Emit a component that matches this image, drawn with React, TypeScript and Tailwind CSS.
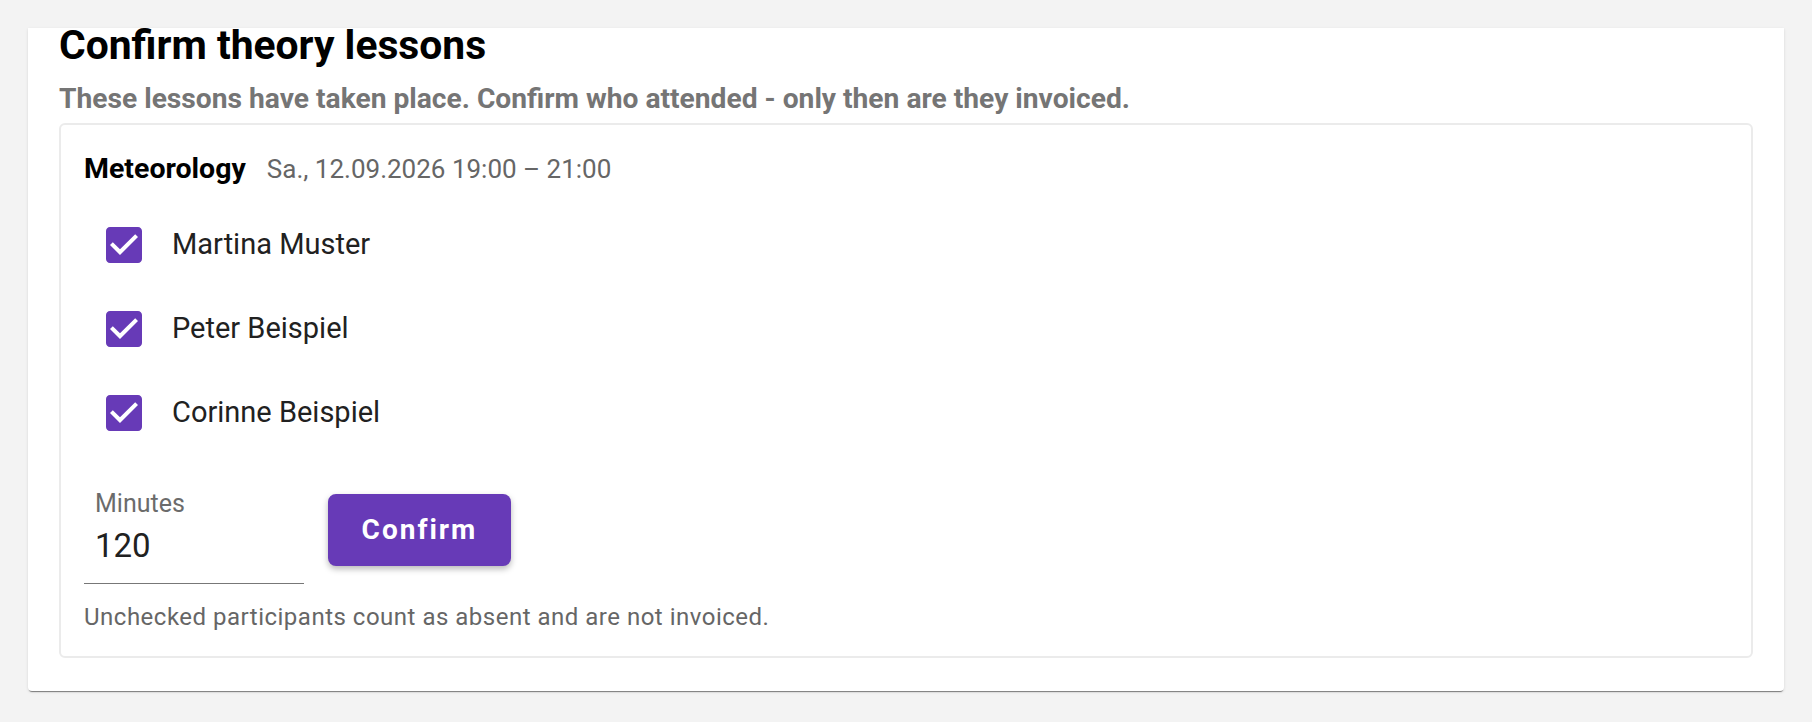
const students = ["Martina Muster", "Peter Beispiel", "Corinne Beispiel"];

function CheckedBox() {
  return (
    <svg viewBox="0 0 24 24" className="w-[48px] h-[48px] shrink-0" fill="#673ab7">
      <path d="M19 3H5c-1.11 0-2 .9-2 2v14c0 1.1.89 2 2 2h14c1.11 0 2-.9 2-2V5c0-1.1-.89-2-2-2zm-9 14l-5-5 1.41-1.41L10 14.17l7.59-7.59L19 8l-9 9z" />
    </svg>
  );
}

export default function App() {
  return (
    <div className="h-[722px] bg-[#f3f3f3] px-[28px] pt-[28px] font-['Roboto',_'Liberation_Sans',_sans-serif]">
      <div className="bg-white rounded-b-[4px] shadow-[0_2px_1px_-1px_rgba(0,0,0,0.45),0_1px_3px_0_rgba(0,0,0,0.12)] px-[31px] pb-[33px]">
        <h2 className="text-[40.8px] leading-[34px] font-bold text-black">Confirm theory lessons</h2>
        <p className="mt-[19px] text-[28.2px] leading-[36px] font-bold text-[#757575]">
          These lessons have taken place. Confirm who attended - only then are they invoiced.
        </p>

        <div className="mt-[6px] border-2 border-[#ebebeb] rounded-[6px] px-[23px] pt-[26px] pb-[24px]">
          <div className="flex items-baseline gap-[21px] leading-[36px]">
            <span className="text-[28.5px] font-bold text-black">Meteorology</span>
            <span className="text-[26px] text-[#666666]">Sa., 12.09.2026 19:00 – 21:00</span>
          </div>

          <div className="mt-[16px] flex flex-col">
            {students.map((name) => (
              <label key={name} className="h-[84px] flex items-center">
                <span className="ml-[16px]">
                  <CheckedBox />
                </span>
                <span className="ml-[24px] text-[29px] text-[#212121]">{name}</span>
              </label>
            ))}
          </div>

          <div className="mt-[36px] flex items-start">
            <div className="w-[220px] border-b border-[#777777] pb-[17px]">
              <div className="pl-[11px] text-[25px] leading-[25px] text-[#6b6b6b]">Minutes</div>
              <div className="mt-[10px] pl-[11px] text-[33px] leading-[40px] text-[#212121]">120</div>
            </div>
            <button className="ml-[24px] mt-[3px] w-[183px] h-[72px] rounded-[8px] bg-[#673ab7] text-white text-[28px] font-bold tracking-[2px] shadow-[0_3px_6px_rgba(0,0,0,0.28)]">
              Confirm
            </button>
          </div>

          <p className="mt-[18px] text-[24px] leading-[30px] tracking-[0.5px] text-[#666666]">
            Unchecked participants count as absent and are not invoiced.
          </p>
        </div>
      </div>
    </div>
  );
}
